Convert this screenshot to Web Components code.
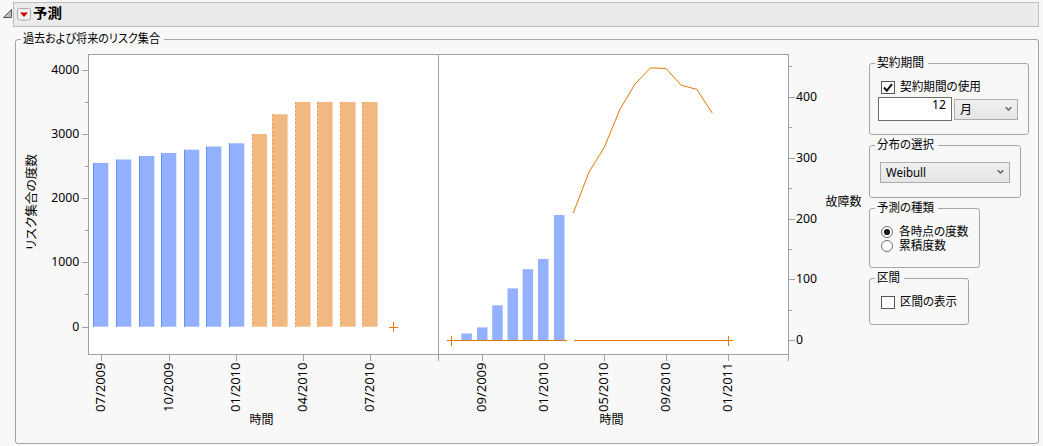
<!DOCTYPE html>
<html lang="ja">
<head>
<meta charset="utf-8">
<title>予測</title>
<style>
  body {
    margin: 0;
    background: #f8f8f8;
    color: #000;
    font: 12px/15px "Noto Sans", "Noto Sans CJK JP", sans-serif;
    overflow: hidden;
  }
  main { padding: 5px 0 0 15px; }
  .content { display: flex; align-items: flex-start; }
  .side { display: flex; flex-direction: column; gap: 3px; padding-top: 9px; }
  .row { display: flex; align-items: flex-start; gap: 2px; }
</style>
</head>
<body>
<outline-header label="予測"></outline-header>
<main>
  <group-box label="過去および将来のリスク集合" text-width="137" style="width:1024px;height:412px">
    <div class="content">
      <forecast-chart></forecast-chart>
      <div class="side">
        <group-box label="契約期間" text-width="47" style="width:160px;height:79px">
          <check-box checked label="契約期間の使用" text-width="81" style="margin:9px 0 0 11px"></check-box>
          <div class="row" style="margin:2px 0 0 8px">
            <number-box value="12"></number-box>
            <drop-down label="月" style="width:64px;margin-top:2px"></drop-down>
          </div>
        </group-box>
        <group-box label="分布の選択" text-width="57" style="width:152px;height:60px">
          <drop-down label="Weibull" text-width="40" style="width:130px;margin:9px 0 0 10px"></drop-down>
        </group-box>
        <group-box label="予測の種類" text-width="57" style="width:111px;height:67px">
          <radio-item checked label="各時点の度数" text-width="69.5" style="margin:9px 0 0 11px"></radio-item>
          <radio-item label="累積度数" text-width="47" style="margin-left:11px"></radio-item>
        </group-box>
        <group-box label="区間" text-width="23" style="width:100px;height:54px">
          <check-box label="区間の表示" text-width="57" style="margin:9px 0 0 11px"></check-box>
        </group-box>
      </div>
    </div>
  </group-box>
</main>

<script>
// small helper, every element renders its own shadow root once
class BaseElement extends HTMLElement {
  constructor() {
    super();
    this.attachShadow({ mode: 'open' });
  }
  connectedCallback() {
    this.shadowRoot.innerHTML = this.render();
  }
  attr(name) {
    return this.getAttribute(name) || '';
  }
}

// one line of text set to a fixed advance width
class FitLabel extends BaseElement {
  render() {
    const w = this.attr('width');
    const fit = w ? `textLength="${w}" lengthAdjust="spacingAndGlyphs"` : '';
    return `
      <style>
        :host { display: block; height: 15px; width: ${w || 14}px; }
        svg { display: block; overflow: visible; }
        text { font-feature-settings: "palt"; fill: #000; }
      </style>
      <svg width="${w || 14}" height="15"><text x="0" y="11" ${fit}>${this.attr('text')}</text></svg>`;
  }
}

class OutlineHeader extends BaseElement {
  render() {
    return `
      <style>
        :host { display: flex; height: 27px; }
        .arrow { width: 13px; height: 27px; flex: none; }
        .bar {
          display: flex; align-items: center; box-sizing: border-box;
          width: 1026px; height: 25px; margin-top: 2px; padding-left: 3px; gap: 2px;
          background: #ebebeb; border: 1px solid #bdbdbd;
        }
        .bar svg { margin-top: -1px; }
        fit-label { font-size: 14px; font-weight: bold; }
      </style>
      <svg class="arrow" viewBox="0 0 13 27"><path d="M11.5 9.5V17.5H3.5Z" fill="#bdbdbd" stroke="#555"/></svg>
      <div class="bar">
        <svg width="14" height="13"><rect x=".5" y=".5" width="13" height="11.5" rx="2" fill="#f3f3f3" stroke="#a8a8a8"/><path d="M3 4.5h8L7 9Z" fill="#cf0000"/></svg>
        <fit-label text="${this.attr('label')}" width="29"></fit-label>
      </div>`;
  }
}

class GroupBox extends BaseElement {
  render() {
    return `
      <style>
        :host { display: block; }
        fieldset {
          box-sizing: border-box; width: 100%; height: 100%; min-width: 0;
          margin: 0; padding: 0; border: 1px solid #a5a5a5; border-radius: 3px;
        }
        legend { margin-left: 5px; padding: 0 4px 0 2px; height: 15px; }
      </style>
      <fieldset>
        <legend><fit-label text="${this.attr('label')}" width="${this.attr('text-width')}"></fit-label></legend>
        <slot></slot>
      </fieldset>`;
  }
}

class CheckBox extends BaseElement {
  render() {
    const mark = this.hasAttribute('checked')
      ? '<path d="M3 6.5L5.8 9.6L11 3.2" fill="none" stroke="#111" stroke-width="2"/>' : '';
    return `
      <style>:host { display: flex; align-items: center; gap: 5px; height: 15px; }</style>
      <svg width="14" height="13"><rect x=".5" y=".5" width="13" height="12" fill="#fff" stroke="#555"/>${mark}</svg>
      <fit-label text="${this.attr('label')}" width="${this.attr('text-width')}"></fit-label>`;
  }
}

class RadioItem extends BaseElement {
  render() {
    const dot = this.hasAttribute('checked') ? '<circle cx="6" cy="6" r="3.1" fill="#1c1c1c"/>' : '';
    return `
      <style>:host { display: flex; align-items: center; gap: 6px; height: 14px; }</style>
      <svg width="12" height="12"><circle cx="6" cy="6" r="5.5" fill="#fff" stroke="#707070"/>${dot}</svg>
      <fit-label text="${this.attr('label')}" width="${this.attr('text-width')}"></fit-label>`;
  }
}

class NumberBox extends BaseElement {
  render() {
    return `
      <style>
        :host {
          display: flex; justify-content: flex-end; box-sizing: border-box;
          width: 74px; height: 24px; padding-right: 5px;
          background: #fff; border: 1px solid #6e6e6e;
        }
      </style>
      <fit-label text="${this.attr('value')}" width="14"></fit-label>`;
  }
}

class DropDown extends BaseElement {
  render() {
    return `
      <style>
        :host {
          display: flex; align-items: center; justify-content: space-between; box-sizing: border-box;
          height: 21px; padding: 0 5px; border: 1px solid #acacac;
          background: linear-gradient(#f0f0f0, #e5e5e5);
        }
        fit-label { margin-top: 1px; }
        svg { margin-top: -2px; }
      </style>
      <fit-label text="${this.attr('label')}" width="${this.attr('text-width')}"></fit-label>
      <svg width="7" height="6"><path d="M.7 1.2L3.5 4L6.3 1.2" fill="none" stroke="#606060" stroke-width="1.5"/></svg>`;
  }
}

// x and top of the bars in both plots
const pastRisk = [[93, 163], [116, 159.5], [139, 156], [161, 153], [184, 149.7], [206, 146.5], [229, 143.3]];
const futureRisk = [[252, 134], [272, 114.3], [295, 102], [317, 102], [340, 102], [362, 102]];
const failures = [[461.3, 333.5], [477, 327.4], [492.2, 305.3], [507.5, 288.4], [522.6, 269.2], [538, 259], [554, 215]];
const forecast = '573.3,213 589,172 604.3,147.3 620,109.3 635,84 650.5,67.8 666,68.5 681.3,85.3 696.7,89.3 712.3,113';

class ForecastChart extends BaseElement {
  text(str, x, y, w, turned) {
    const rot = turned ? ` transform="rotate(-90 ${x} ${y})"` : '';
    return `<text x="${x}" y="${y}" textLength="${w}" lengthAdjust="spacingAndGlyphs"${rot}>${str}</text>`;
  }
  axes() {
    let ticks = '';
    let labels = '';
    [[4000, 70], [3000, 134], [2000, 198], [1000, 262], [0, 327]].forEach(([v, y]) => {
      ticks += `M82 ${y + 0.5}H88`;
      const w = String(v).length * 7;
      labels += this.text(v, 79.3 - w, y + 4, w);
    });
    [102, 166, 230, 294].forEach(y => ticks += `M85 ${y + 0.5}H88`);
    [[400, 97], [300, 158], [200, 219], [100, 279], [0, 340]].forEach(([v, y]) => {
      ticks += `M789 ${y + 0.5}H795`;
      labels += this.text(v, 796, y + 4, String(v).length * 7);
    });
    [66, 127, 188, 249, 310].forEach(y => ticks += `M789 ${y + 0.5}H792`);
    [[101, '07/2009'], [169, '10/2009'], [236, '01/2010'], [303, '04/2010'], [370, '07/2010'],
     [482, '09/2009'], [544, '01/2010'], [604, '05/2010'], [666, '09/2010'], [728, '01/2011']].forEach(([x, s]) => {
      ticks += `M${x + 0.5} 355V361`;
      labels += this.text(s, x + 4.3, 412, 49.5, true);
    });
    return `<path d="${ticks}M88 54.5H789M88.5 54V355M88 354.5H789M438.5 54V361M788.5 54V361" stroke="#a0a0a0" fill="none"/>${labels}`;
  }
  render() {
    const past = pastRisk.map(([x, y]) => `
      <rect x="${x}" y="${y}" width="15.3" height="${326.7 - y}" fill="#94b1ff"/>
      <rect x="${x}" y="${y}" width="1" height="${327 - y}" fill="#6191f8"/>`).join('');
    const future = futureRisk.map(([x, y], i) => `
      <rect x="${x}" y="${y}" width="${i ? 15.6 : 15}" height="${326.7 - y}" fill="#f1b981"/>
      <path d="M${x + 0.5} ${y}V327" stroke="#f8d9b8"/>
      <path d="M${x + 0.5} ${y}V327" stroke="#eb9c50" stroke-dasharray="2.5 1.5"/>`).join('');
    const fails = failures.map(([x, y]) => `<rect x="${x}" y="${y}" width="10.5" height="${340 - y}" fill="#94b1ff"/>`).join('');
    return `
      <style>
        :host { display: block; width: 853px; height: 396px; }
        svg { display: block; }
        text { fill: #000; font-feature-settings: "palt"; }
      </style>
      <svg width="853" height="396" viewBox="16 47 853 396">
        <rect x="88" y="54" width="701" height="301" fill="#fff"/>
        ${past}${future}${fails}
        <g stroke="#e07800" fill="none">
          <path d="M389 327.5H398M393.5 322V332M447 340.5H567M574 340.5H733M451.5 336V346M728.5 336V346"/>
          <polyline points="${forecast}"/>
        </g>
        ${this.axes()}
        ${this.text('リスク集合の度数', 36, 250, 96, true)}
        ${this.text('時間', 249.5, 424, 24)}
        ${this.text('時間', 599.5, 424, 24)}
        ${this.text('故障数', 825.5, 206, 36)}
      </svg>`;
  }
}

customElements.define('fit-label', FitLabel);
customElements.define('outline-header', OutlineHeader);
customElements.define('group-box', GroupBox);
customElements.define('check-box', CheckBox);
customElements.define('radio-item', RadioItem);
customElements.define('number-box', NumberBox);
customElements.define('drop-down', DropDown);
customElements.define('forecast-chart', ForecastChart);
</script>
</body>
</html>
